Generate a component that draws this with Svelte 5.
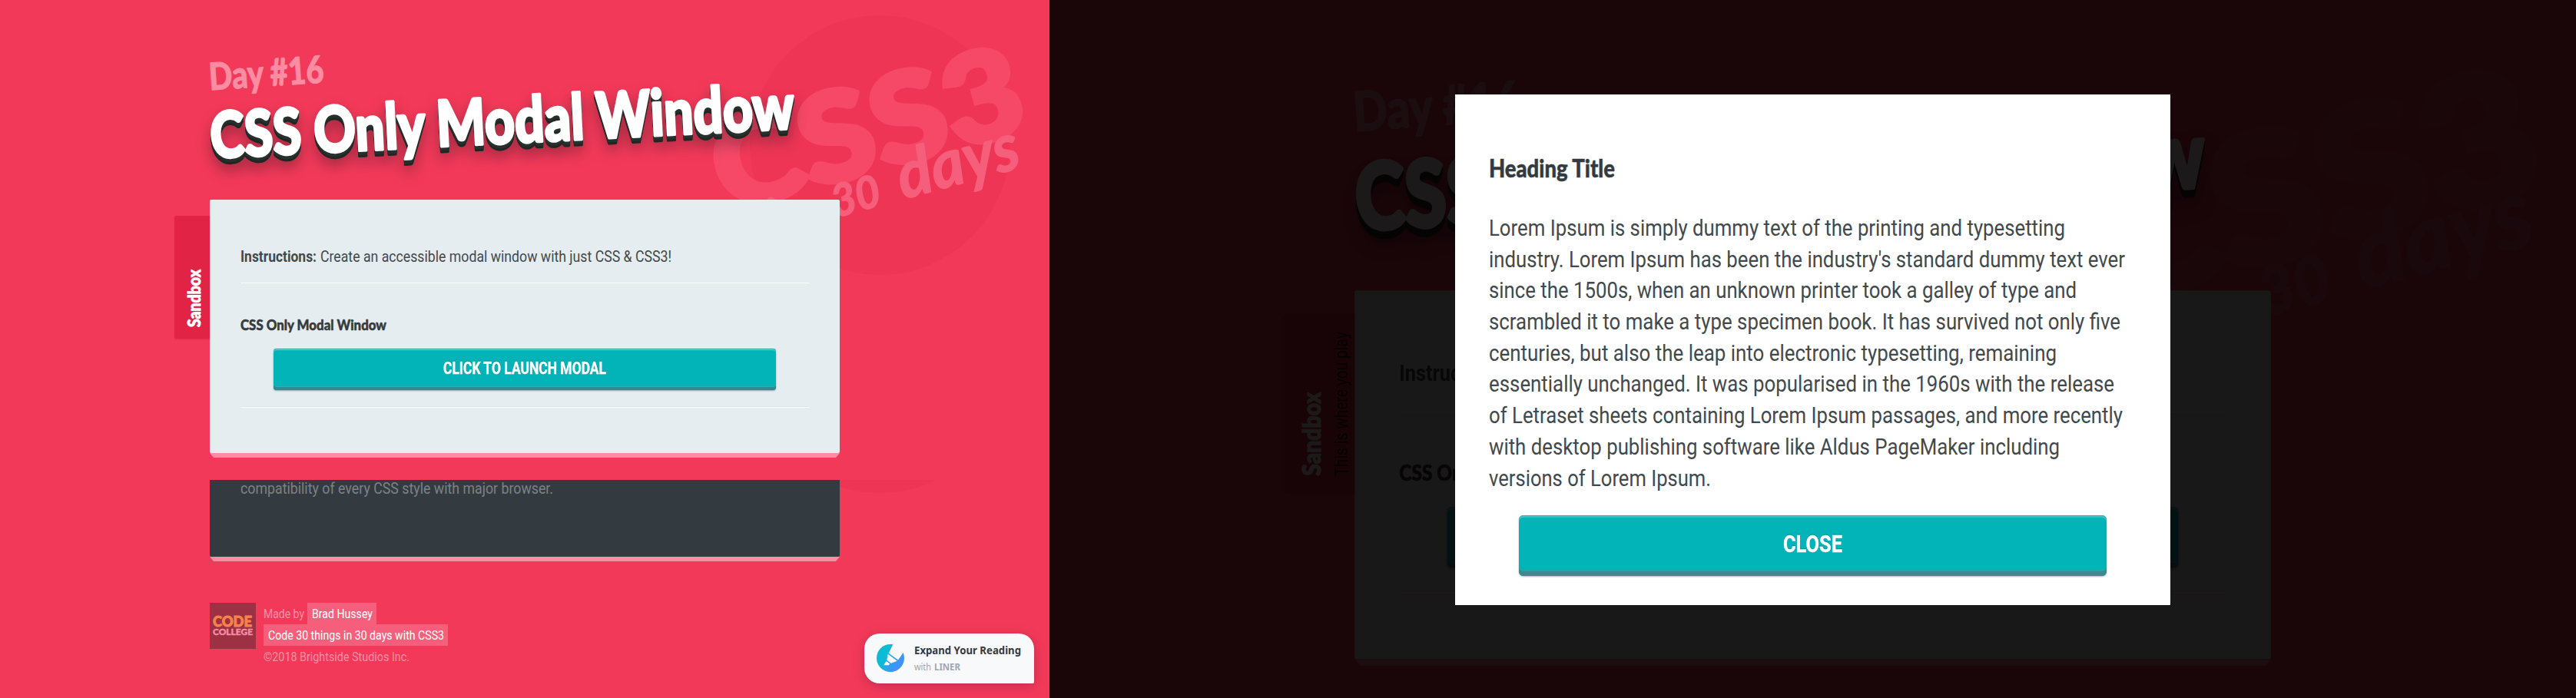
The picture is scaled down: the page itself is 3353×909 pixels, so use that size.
<script>
  const modalLines = [
    ['Lorem Ipsum is simply dummy text of the printing and typesetting', 750],
    ["industry. Lorem Ipsum has been the industry's standard dummy text ever", 828],
    ['since the 1500s, when an unknown printer took a galley of type and', 765],
    ['scrambled it to make a type specimen book. It has survived not only five', 822],
    ['centuries, but also the leap into electronic typesetting, remaining', 739],
    ['essentially unchanged. It was popularised in the 1960s with the release', 814],
    ['of Letraset sheets containing Lorem Ipsum passages, and more recently', 825],
    ['with desktop publishing software like Aldus PageMaker including', 743],
    ['versions of Lorem Ipsum.', 289]
  ];
</script>

{#snippet fit(text, width, size, kind)}
  <svg class="fit {kind}" {width} height={size}>
    <text x="0" y={size * 0.8} font-size={size} textLength={width} lengthAdjust="spacingAndGlyphs">{text}</text>
  </svg>
{/snippet}

{#snippet scene(open)}
  <section class="scene">
    <svg class="art" width="1366" height="625" viewBox="0 0 1366 625">
      <circle cx="1145" cy="189" r="169" fill="#ee3556" />
      <g transform="translate(944 276) rotate(-15.2)">
        <text class="brand" font-size="160" textLength="413" lengthAdjust="spacingAndGlyphs">CSS3</text>
      </g>
      <g class="script" transform="translate(1005 306) rotate(-15.2)">
        <text font-size="64" textLength="50" lengthAdjust="spacingAndGlyphs">in</text>
        <text x="86" font-size="58" textLength="64" lengthAdjust="spacingAndGlyphs">30</text>
        <text x="177" font-size="86" textLength="162" lengthAdjust="spacingAndGlyphs">days</text>
      </g>
    </svg>
    <svg class="head" width="1366" height="260" viewBox="0 0 1366 260">
      <g transform="translate(273 117.5) rotate(-3.9)">
        <text class="day" font-size="49" textLength="150" lengthAdjust="spacingAndGlyphs">Day #16</text>
      </g>
      <g class="lift">
        <g transform="translate(275 206) rotate(-2.9)">
          <text class="title" font-size="83" textLength="761" lengthAdjust="spacingAndGlyphs">CSS Only Modal Window</text>
        </g>
      </g>
    </svg>
    <div class="card">
      <div class="tab" class:open>
        <svg width="64" height="160" viewBox="0 0 64 160">
          <text class="tab-name" transform="translate(34 145) rotate(-90)" font-size="22.5" textLength="75" lengthAdjust="spacingAndGlyphs">Sandbox</text>
          {#if open}
            <text class="tab-note" transform="translate(58 145) rotate(-90)" font-size="16" textLength="129" lengthAdjust="spacingAndGlyphs">This is where you play</text>
          {/if}
        </svg>
      </div>
      <div class="row">
        {@render fit('Instructions:', 99, 20, 'body bold')}
        {@render fit('Create an accessible modal window with just CSS & CSS3!', 457, 20, 'body')}
      </div>
      <div class="rule first"></div>
      <div class="heading">{@render fit('CSS Only Modal Window', 190, 19, 'ink display')}</div>
      <div class="button">{@render fit('CLICK TO LAUNCH MODAL', 212, 22, 'white bold')}</div>
      <div class="rule second"></div>
    </div>
    <div class="edge"></div>
  </section>
{/snippet}

<main>
  <div class="left">
    {@render scene(false)}
    <section class="lower">
      <svg class="art" width="1366" height="284" viewBox="0 625 1366 284">
        <circle cx="1145" cy="473" r="169" fill="#ee3556" />
      </svg>
      <div class="dark">{@render fit('compatibility of every CSS style with major browser.', 407, 20, 'dim')}</div>
      <div class="edge"></div>
      <footer>
        <div class="logo">
          {@render fit('CODE', 51, 18, 'code')}
          {@render fit('COLLEGE', 52, 11.5, 'college')}
        </div>
        <div class="credits">
          <div class="made">
            {@render fit('Made by', 53, 17, 'pink')}
            <span class="chip">{@render fit('Brad Hussey', 79, 17, 'white')}</span>
          </div>
          <span class="chip">{@render fit('Code 30 things in 30 days with CSS3', 229, 17, 'white')}</span>
          <div class="copy">{@render fit('©2018 Brightside Studios Inc.', 190, 17, 'pink')}</div>
        </div>
      </footer>
      <aside class="liner">
        <svg width="36" height="36" viewBox="0 0 36 36">
          <defs>
            <linearGradient id="pen" x1="0" y1="0.2" x2="1" y2="0.8">
              <stop offset="0.3" stop-color="#0cbcd4" />
              <stop offset="0.75" stop-color="#3d94fa" />
            </linearGradient>
          </defs>
          <circle cx="18" cy="18" r="18" fill="url(#pen)" />
          <path d="M21.7 -0.5 L15.6 11.4 L28 20.4 L35.6 9.5 L36.5 -0.5Z" fill="#f8f9fb" />
          <path d="M14.6 12.8 L26.8 21.8 L18.8 24.8 L13.4 20.8Z M12.6 22 L17.2 25.4 L15.8 27.2 L9.2 27.2Z" fill="#fff" />
        </svg>
        <div class="liner-text">
          {@render fit('Expand Your Reading', 139, 13.5, 'noto strong')}
          <div class="liner-sub">
            {@render fit('with', 22, 13, 'noto grey')}
            {@render fit('LINER', 34, 13, 'noto grey strongest')}
          </div>
        </div>
      </aside>
    </section>
  </div>

  <div class="right">
    <div class="zoomed">{@render scene(true)}</div>
    <div class="overlay">
      <div class="modal">
        {@render fit('Heading Title', 164, 33, 'ink display')}
        <div class="copytext">
          {#each modalLines as [text, width]}
            <div class="line">{@render fit(text, width, 29, 'body')}</div>
          {/each}
        </div>
        <div class="button large">{@render fit('CLOSE', 77, 32, 'white bold')}</div>
      </div>
    </div>
  </div>
</main>

<style>
  :global(body) { background: #f33959; }
  main { display: flex; width: 3353px; height: 909px; overflow: hidden; font-family: Roboto, sans-serif; }
  .left { position: relative; width: 1366px; flex: none; background: #f33959; }
  .right { position: relative; flex: 1; overflow: hidden; background: #f33959; }
  .zoomed { width: 1366px; transform: scale(1.4546); transform-origin: 0 0; }
  .scene { position: relative; height: 625px; overflow: hidden; background: #f33959; }
  .art { position: absolute; left: 0; top: 0; }
  .head { position: relative; display: block; }
  .fit { display: block; flex: none; overflow: visible; }
  .ink { fill: #333b40; }
  .body { fill: #41494d; }
  .white { fill: #fff; }
  .dim { fill: #7d8285; }
  .pink { fill: #fb8fa2; }
  .bold { font-weight: 700; }
  .display { font-family: Lato, sans-serif; font-weight: 900; stroke: #333b40; stroke-width: 0.5; stroke-linejoin: round; }
  .brand { font-family: Lato, sans-serif; font-weight: 900; fill: #f64867; stroke: #f64867; stroke-width: 7; }
  .script { font-family: Lato, sans-serif; font-weight: 700; font-style: italic; fill: #f55f7b; stroke: #f55f7b; stroke-width: 1.5; stroke-linejoin: round; }
  .day { font-family: Lato, sans-serif; font-weight: 900; fill: #fb8ca1; stroke: #fb8ca1; stroke-width: 1; stroke-linejoin: round; }
  .title { font-family: Lato, sans-serif; font-weight: 900; fill: #fff; stroke: #fff; stroke-width: 3.5; stroke-linejoin: round; }
  .lift { filter: drop-shadow(0.8px 4px 0 #26302c) drop-shadow(0.6px 3px 0 #1f2623) drop-shadow(0 9px 9px rgba(40, 20, 30, 0.38)); }

  .card { position: relative; box-sizing: border-box; width: 820px; height: 330px; margin-left: 273px; padding: 65px 40px 0; background: #e6edf0; border-radius: 2px; }
  .tab { position: absolute; right: 100%; top: 20.5px; width: 46px; height: 160px; overflow: hidden; background: #e12345; border-radius: 3px 0 0 3px; box-shadow: 0 1px 2px rgba(160, 0, 40, 0.25); }
  .tab.open { width: 64px; }
  .tab svg { display: block; }
  .tab-name { font-family: Lato, sans-serif; font-weight: 900; fill: #fff; stroke: #fff; stroke-width: 0.9; stroke-linejoin: round; }
  .tab-note { fill: #200810; }
  .row { display: flex; gap: 4.5px; }
  .rule { height: 1px; background: #fcfdfd; border-top: 1px solid #dde3e6; }
  .rule.first { margin-top: 22px; border-top-color: #e6ebee; }
  .rule.second { margin-top: 21px; }
  .heading { margin-top: 46px; }
  .button { display: flex; justify-content: center; box-sizing: border-box; height: 54px; margin: 20px 43px 0; padding-top: 15px; background: #02b4b8; border-radius: 4px; box-shadow: inset 0 1px 0 #3a9498, inset 0 2px 0 #7fd6d8, inset 0 -4px 0 #318a90, inset 0 -5px 0 #2ab0b4, 0 1px 2px rgba(40, 80, 90, 0.45); }
  .button :global(.fit) { filter: drop-shadow(0 -1px 0 rgba(0, 70, 75, 0.35)); stroke: #fff; stroke-width: 0.4; }
  .edge { width: 820px; height: 6px; margin-left: 273px; background: #fb8ca1; clip-path: polygon(0 0, 100% 0, calc(100% - 5px) 100%, 5px 100%); }

  .lower { position: relative; height: 284px; }
  .dark { position: relative; box-sizing: border-box; width: 820px; height: 100px; margin-left: 273px; padding: 1.5px 40px 0; background: #333b41; border-radius: 0 0 2px 2px; }
  footer { display: flex; gap: 10px; margin: 54px 0 0 273px; }
  .logo { box-sizing: border-box; width: 60px; height: 60px; padding: 17px 4px 0; background: #9e3044; }
  .code { font-family: Lato, sans-serif; font-weight: 900; fill: #f8824c; stroke: #f8824c; stroke-width: 0.9; }
  .college { margin-top: -2px; font-family: Lato, sans-serif; font-weight: 900; fill: #f58fa3; stroke: #f58fa3; stroke-width: 0.4; }
  .credits { display: flex; flex-direction: column; align-items: flex-start; }
  .made { display: flex; align-items: center; gap: 4px; }
  .chip { display: block; box-sizing: border-box; height: 28px; padding: 5.5px 5.5px 0; background: #f65f7b; }
  .copy { padding-top: 5.5px; }
  .liner { position: absolute; right: 20px; bottom: 19.5px; display: flex; gap: 12.5px; box-sizing: border-box; width: 221.5px; height: 64.5px; padding: 14px 0 0 16.5px; background: #f8f9fb; border-radius: 20px 20px 2px 20px; box-shadow: 0 3px 14px rgba(90, 30, 60, 0.35); }
  .liner-text { padding-top: 2.3px; }
  .liner-sub { display: flex; gap: 4px; margin-top: 8.2px; }
  .noto { font-family: "Noto Sans", sans-serif; }
  .strong { font-weight: 700; fill: #333a42; }
  .grey { fill: #a0a6ae; }
  .strongest { font-weight: 700; }

  .overlay { position: absolute; inset: 0; display: flex; align-items: flex-start; padding: 122.5px 0 0 528px; background: rgba(2, 0, 0, 0.9); }
  .modal { box-sizing: border-box; width: 931px; height: 665px; padding: 82px 44px 0; background: #fff; }
  .copytext { margin-top: 46.5px; }
  .line { height: 40.7px; }
  .button.large { height: 79px; margin: 20.5px 39px 0; padding-top: 22.5px; border-radius: 6px; box-shadow: inset 0 1px 0 #58a9ac, inset 0 3px 0 #3fc0c3, inset 0 -6px 0 #3b8a90, inset 0 -8px 0 #1fa9ad, 0 1px 2px rgba(40, 80, 90, 0.45); }
</style>
